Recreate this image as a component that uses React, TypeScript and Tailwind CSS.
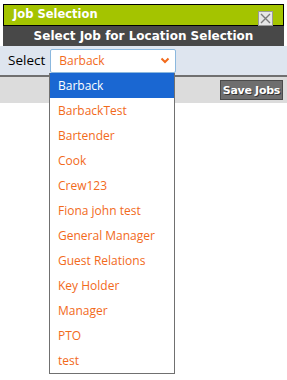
import React from "react";

const items = [
  "Barback",
  "BarbackTest",
  "Bartender",
  "Cook",
  "Crew123",
  "Fiona john test",
  "General Manager",
  "Guest Relations",
  "Key Holder",
  "Manager",
  "PTO",
  "test",
];

export default function App() {
  return (
    <div className="relative w-[287px] h-[380px] bg-white overflow-hidden" style={{ fontFamily: '"Open Sans", sans-serif' }}>
      <div className="pt-[4px] px-[3px]">
        <div className="relative h-[22px] border border-black bg-[#a4c400] pl-[9px] flex items-center">
          <span className="text-white font-bold text-[11.5px] leading-none" style={{ fontFamily: '"DejaVu Sans", sans-serif' }}>
            Job Selection
          </span>
          <div className="absolute right-[10px] top-[6px] w-[15px] h-[15px] bg-[#e6e6e6] border border-[#9a9a9a] flex items-center justify-center">
            <svg width="11" height="11" viewBox="0 0 11 11">
              <path d="M1 1 L10 10 M10 1 L1 10" stroke="#7a7a7a" strokeWidth="1.4" />
            </svg>
          </div>
        </div>
        <div className="h-[20px] bg-[#484848] flex items-center justify-center">
          <span className="text-white font-bold text-[12px] leading-none" style={{ fontFamily: '"DejaVu Sans", sans-serif' }}>
            Select Job for Location Selection
          </span>
        </div>
      </div>
      <div className="h-[29px] bg-[#dee5ef] flex items-center pl-[8px] gap-[5px]">
        <span className="text-black text-[13.5px]">Select</span>
        <div className="w-[126px] h-[24px] bg-white border border-[#8bb8de] rounded-[2px] flex items-center justify-between pl-[8px] pr-[5px]">
          <span className="text-[#f26a1b] text-[12px]">Barback</span>
          <svg width="10" height="7" viewBox="0 0 10 7">
            <path d="M1.5 1.5 L5 5 L8.5 1.5" stroke="#f26a1b" strokeWidth="2" fill="none" />
          </svg>
        </div>
      </div>
      <div className="h-[28px] bg-[#dcdcdc] border-t-2 border-[#707070] flex items-center justify-end pr-[4px]">
        <button
          className="h-[20px] px-[2px] bg-[#6e6e6e] border border-[#4a4a4a] text-white font-bold text-[11px] leading-none tracking-[-0.3px]"
          style={{ fontFamily: '"DejaVu Sans", sans-serif', textShadow: "1px 1px 0 #333" }}
        >
          Save Jobs
        </button>
      </div>
      <div className="absolute left-[49px] top-[73px] w-[126px] bg-white border border-[#707070] border-t-0">
        {items.map((it, i) => (
          <div
            key={it}
            className={
              i === 0
                ? "h-[25px] flex items-center pl-[8px] bg-[#1a67d2] text-white text-[12px]"
                : "h-[25px] flex items-center pl-[8px] text-[#f26a1b] text-[12px]"
            }
          >
            {it}
          </div>
        ))}
      </div>
    </div>
  );
}
